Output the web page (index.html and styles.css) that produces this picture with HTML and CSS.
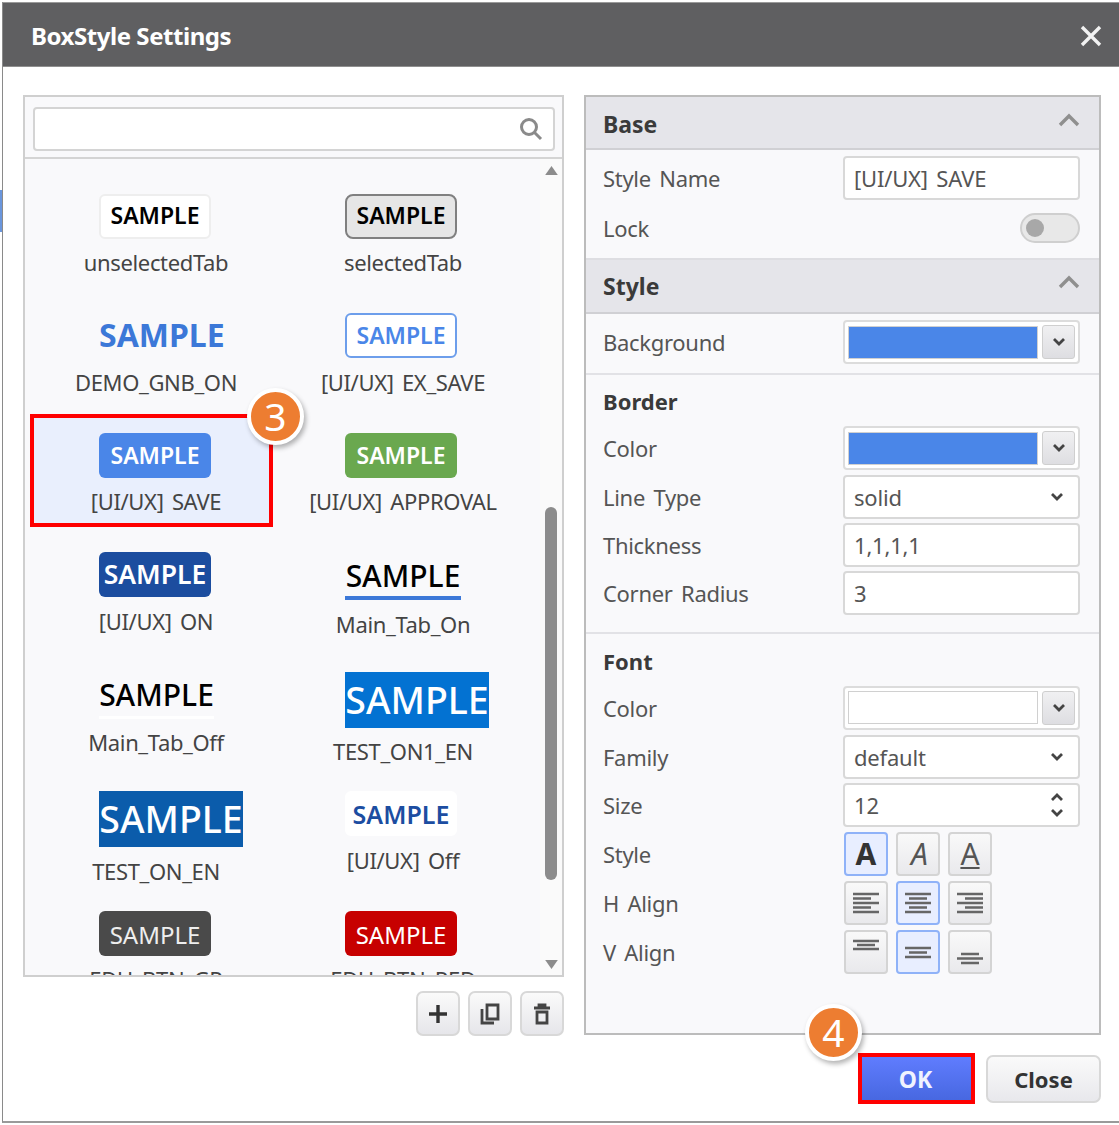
FILE: index.html
```html
<!DOCTYPE html>
<html lang="en">
<head>
<meta charset="utf-8">
<title>BoxStyle Settings</title>
<link rel="stylesheet" href="styles.css">
</head>
<body>
<div class="backdrop-mark"></div>
<div class="dialog">
  <header class="titlebar">
    <h1 class="title">BoxStyle Settings</h1>
    <svg class="close-x" viewBox="0 0 22 22"><path d="M2 2 L20 20 M20 2 L2 20"/></svg>
  </header>
  <div class="content">
    <div class="columns">
      <section class="left">
        <div class="list-panel">
          <div class="search-row">
            <div class="search">
              <svg class="search-icon" viewBox="0 0 24 24"><circle cx="10" cy="10" r="7.5"/><path d="M15.5 15.5 L22 22"/></svg>
            </div>
          </div>
          <div class="scroller">
            <div class="grid">
              <div class="item"><div class="sample s-unselected">SAMPLE</div><div class="name">unselectedTab</div></div>
              <div class="item second"><div class="sample s-selected">SAMPLE</div><div class="name">selectedTab</div></div>
              <div class="item"><div class="sample s-gnb">SAMPLE</div><div class="name">DEMO_GNB_ON</div></div>
              <div class="item second"><div class="sample s-exsave">SAMPLE</div><div class="name">[UI/UX] EX_SAVE</div></div>
              <div class="item is-selected"><div class="sample s-save">SAMPLE</div><div class="name">[UI/UX] SAVE</div></div>
              <div class="item second"><div class="sample s-approval">SAMPLE</div><div class="name">[UI/UX] APPROVAL</div></div>
              <div class="item"><div class="sample s-on">SAMPLE</div><div class="name">[UI/UX] ON</div></div>
              <div class="item second"><div class="sample s-tab-on">SAMPLE</div><div class="name">Main_Tab_On</div></div>
              <div class="item"><div class="sample s-tab-off">SAMPLE</div><div class="name">Main_Tab_Off</div></div>
              <div class="item second"><div class="sample s-test1">SAMPLE</div><div class="name">TEST_ON1_EN</div></div>
              <div class="item"><div class="sample s-test2">SAMPLE</div><div class="name">TEST_ON_EN</div></div>
              <div class="item second"><div class="sample s-off">SAMPLE</div><div class="name">[UI/UX] Off</div></div>
              <div class="item"><div class="sample s-gr">SAMPLE</div><div class="name">EDU_BTN_GR</div></div>
              <div class="item second"><div class="sample s-red">SAMPLE</div><div class="name">EDU_BTN_RED</div></div>
            </div>
            <div class="scrollbar">
              <svg class="arrow" viewBox="0 0 14 10"><path d="M7 0 L14 10 L0 10 Z"/></svg>
              <div class="track"><div class="thumb"></div></div>
              <svg class="arrow" viewBox="0 0 14 10"><path d="M0 0 L14 0 L7 10 Z"/></svg>
            </div>
          </div>
        </div>
        <div class="toolbar">
          <button class="tool"><svg viewBox="0 0 24 24"><path class="ink" d="M12 3 V21 M3 12 H21"/></svg></button>
          <button class="tool"><svg viewBox="0 0 24 24"><path class="ink-thin" d="M9 3 H20 V17 H9 Z M4 7 V21 H16"/></svg></button>
          <button class="tool"><svg viewBox="0 0 24 24"><path class="ink-thin" d="M4 6 H20 M9 6 V3 H15 V6 M7 10 H17 V21 H7 Z"/></svg></button>
        </div>
      </section>

      <section class="props">
        <div class="group-head first"><span>Base</span><svg class="fold" viewBox="0 0 22 14"><path d="M2 12 L11 3 L20 12"/></svg></div>
        <div class="group-body base-body">
          <div class="row"><label>Style Name</label><div class="field">[UI/UX] SAVE</div></div>
          <div class="row lock-row"><label>Lock</label><div class="toggle"><span class="knob"></span></div></div>
        </div>
        <div class="group-head"><span>Style</span><svg class="fold" viewBox="0 0 22 14"><path d="M2 12 L11 3 L20 12"/></svg></div>
        <div class="group-body bg-body">
          <div class="row"><label>Background</label><div class="color-field"><span class="swatch blue"></span><span class="drop"><svg class="chev" viewBox="0 0 14 10"><path d="M2 2 L7 7 L12 2"/></svg></span></div></div>
        </div>
        <div class="group-body border-body">
          <h2 class="sub">Border</h2>
          <div class="row"><label>Color</label><div class="color-field"><span class="swatch blue"></span><span class="drop"><svg class="chev" viewBox="0 0 14 10"><path d="M2 2 L7 7 L12 2"/></svg></span></div></div>
          <div class="row"><label>Line Type</label><div class="field select">solid<svg class="chev" viewBox="0 0 14 10"><path d="M2 2 L7 7 L12 2"/></svg></div></div>
          <div class="row"><label>Thickness</label><div class="field">1,1,1,1</div></div>
          <div class="row"><label>Corner Radius</label><div class="field">3</div></div>
        </div>
        <div class="group-body font-body">
          <h2 class="sub">Font</h2>
          <div class="row"><label>Color</label><div class="color-field"><span class="swatch"></span><span class="drop"><svg class="chev" viewBox="0 0 14 10"><path d="M2 2 L7 7 L12 2"/></svg></span></div></div>
          <div class="row"><label>Family</label><div class="field select">default<svg class="chev" viewBox="0 0 14 10"><path d="M2 2 L7 7 L12 2"/></svg></div></div>
          <div class="row"><label>Size</label><div class="field select">12<span class="spin"><svg class="chev" viewBox="0 0 14 10"><path d="M2 8 L7 3 L12 8"/></svg><svg class="chev" viewBox="0 0 14 10"><path d="M2 2 L7 7 L12 2"/></svg></span></div></div>
          <div class="row"><label>Style</label><div class="btns">
            <button class="opt on a-bold">A</button><button class="opt a-italic">A</button><button class="opt a-under">A</button>
          </div></div>
          <div class="row"><label>H Align</label><div class="btns">
            <button class="opt"><svg viewBox="0 0 28 22"><path d="M1 2 H27 M1 6.500 H19 M1 11 H27 M1 15.500 H19 M1 20 H27"/></svg></button>
            <button class="opt on"><svg viewBox="0 0 28 22"><path d="M1 2 H27 M5 6.500 H23 M1 11 H27 M5 15.500 H23 M1 20 H27"/></svg></button>
            <button class="opt"><svg viewBox="0 0 28 22"><path d="M1 2 H27 M9 6.500 H27 M1 11 H27 M9 15.500 H27 M1 20 H27"/></svg></button>
          </div></div>
          <div class="row"><label>V Align</label><div class="btns">
            <button class="opt"><svg class="valign" viewBox="0 0 28 44"><path d="M1 11 H27 M5 15 H23 M1 19 H27"/></svg></button>
            <button class="opt on"><svg class="valign" viewBox="0 0 28 44"><path d="M1 18 H27 M5 22.500 H23 M1 27 H27"/></svg></button>
            <button class="opt"><svg class="valign" viewBox="0 0 28 44"><path d="M5 24 H23 M1 28.500 H27 M5 33 H23"/></svg></button>
          </div></div>
        </div>
      </section>
    </div>
    <footer class="footer">
      <button class="btn-ok">OK</button>
      <button class="btn-close">Close</button>
    </footer>
  </div>
</div>
<div class="mark-box box-item"></div>
<div class="mark-box box-ok"></div>
<div class="badge badge-3">3</div>
<div class="badge badge-4">4</div>
</body>
</html>
```
FILE: styles.css
```css
* { box-sizing: border-box; }
html, body { margin: 0; padding: 0; }
body {
  width: 1119px;
  height: 1125px;
  overflow: hidden;
  background: #fff;
  padding: 2px 0 0 2px;
  font-family: "Noto Sans", "Noto Sans CJK KR", sans-serif;
  color: #444;
  position: relative;
}
.backdrop-mark {
  position: absolute;
  left: 0;
  top: 190px;
  width: 2px;
  height: 42px;
  background: #6a96dc;
}
.dialog {
  width: 1117px;
  height: 1121px;
  border-left: 1px solid #8a8a8a;
  border-bottom: 2px solid #9a9a9a;
  background: #fff;
  display: flex;
  flex-direction: column;
}
.titlebar {
  height: 65px;
  flex: none;
  background: #5f5f61;
  border-top: 1px solid #9a9a9a;
  border-bottom: 1px solid #8f8f8f;
  display: flex;
  align-items: center;
  justify-content: space-between;
  padding: 2px 17px 0 28px;
}
.title {
  margin: 0;
  font-size: 24px;
  font-weight: 700;
  color: #fff;
  letter-spacing: -.45px;
  line-height: 30px;
}
.close-x { width: 22px; height: 22px; fill: none; stroke: #f2f2f2; stroke-width: 3.400; }
.content { flex: 1; padding: 28px 18px 0 20px; display: flex; flex-direction: column; }
.columns { display: flex; gap: 20px; align-items: flex-start; }
.left { width: 541px; flex: none; }
.list-panel {
  height: 882px;
  border: 2px solid #cfcfcf;
  background: #f9f9fb;
  display: flex;
  flex-direction: column;
}
.search-row {
  height: 62px;
  flex: none;
  padding: 10px 7px 0 8px;
  border-bottom: 2px solid #d4d4d4;
}
.search {
  height: 44px;
  background: #fff;
  border: 2px solid #d4d4d4;
  border-radius: 4px;
  display: flex;
  align-items: center;
  justify-content: flex-end;
  padding-right: 10px;
}
.search-icon { width: 24px; height: 24px; fill: none; stroke: #8a8a8a; stroke-width: 3; }
.scroller { flex: 1; min-height: 0; display: flex; overflow: hidden; }
.grid {
  flex: 1;
  padding: 18.500px 0 0 8px;
  display: grid;
  grid-template-columns: 238px 238px;
  column-gap: 9px;
  grid-auto-rows: 119.500px;
}
.item { height: 108px; padding: 16px 0 0 66px; position: relative; }
.item.second { padding-left: 65px; }
.item.is-selected { background: #e9effd; }
.name {
  position: relative;
  width: 300px;
  margin-left: -93px;
  margin-top: 8.500px;
  text-align: center;
  font-size: 22px;
  line-height: 30px;
  color: #444;
  word-spacing: 3px;
  letter-spacing: -.35px;
  white-space: nowrap;
}
.second .name { margin-left: -92px; }
.sample {
  width: 112px;
  height: 45px;
  border-radius: 6px;
  display: flex;
  align-items: center;
  justify-content: center;
  font-size: 23px;
  font-weight: 600;
  line-height: 1;
  padding-bottom: 1px;
  white-space: nowrap;
  overflow: visible;
}
.s-unselected { background: #fff; border: 2px solid #eee; color: #000; }
.s-selected { background: #e6e6e6; border: 2px solid #808080; color: #000; border-radius: 8px; }
.s-gnb { width: 126px; color: #3c78d8; font-size: 32px; font-weight: 700; justify-content: flex-start; }
.s-exsave { background: #fff; border: 2px solid #6d9eeb; color: #4a86e8; padding-bottom: 0; }
.s-save { background: #4a86e8; color: #fff; padding-bottom: 0; }
.s-approval { background: #6aa84f; color: #fff; padding-bottom: 0; }
.s-on { background: #1c4d9f; color: #fff; font-size: 26.500px; padding-bottom: 0; }
.s-tab-on { width: 116px; height: 39px; margin-top: 9px; border-radius: 0; border-bottom: 4px solid #3c78d8; color: #000; font-size: 30px; font-weight: 500; padding-bottom: 5px; }
.s-tab-off { width: 115px; height: 39px; margin-top: 8px; margin-bottom: 5px; border-radius: 0; border-bottom: 3px solid #fff; color: #000; font-size: 30px; font-weight: 500; padding-bottom: 5px; }
.s-test1 { width: 144px; height: 56px; border-radius: 0; background: #0372d2; color: #fff; font-size: 37.500px; font-weight: 500; padding-bottom: 0; }
.s-test2 { width: 144px; height: 56px; border-radius: 0; background: #0b5cab; color: #fff; font-size: 37.500px; font-weight: 500; padding-bottom: 0; }
.s-off { background: #fff; color: #1c4da1; font-size: 25px; padding-bottom: 0; padding-top: 2px; }
.s-gr { background: #4a4a4a; color: #eee; font-weight: 400; font-size: 24px; padding-bottom: 0; padding-top: 3px; }
.s-red { background: #c70000; color: #fff; font-weight: 400; font-size: 24px; padding-bottom: 0; padding-top: 3px; }

.scrollbar {
  width: 22px;
  flex: none;
  background: #fafafa;
  display: flex;
  flex-direction: column;
  align-items: center;
  padding: 7px 0 6px;
}
.arrow { width: 13px; height: 9px; fill: #8c8c8c; flex: none; }
.track { flex: 1; width: 12px; padding-top: 332px; }
.thumb { width: 12px; height: 373px; background: #8c8c8c; border-radius: 6px; }

.toolbar { display: flex; justify-content: flex-end; gap: 8px; margin-top: 14px; }
.tool {
  width: 44px;
  height: 45px;
  padding: 0;
  border: 2px solid #d8d8d8;
  border-radius: 7px;
  background: linear-gradient(#fafafa, #e6e6ea);
  display: flex;
  align-items: center;
  justify-content: center;
}
.tool svg { width: 24px; height: 24px; fill: none; }
.ink { stroke: #333; stroke-width: 3.400; }
.ink-thin { stroke: #444; stroke-width: 2.800; }

.props {
  width: 517px;
  flex: none;
  height: 940px;
  border: 2px solid #bcbcbc;
  background: #f9f9fb;
}
.group-head {
  height: 54px;
  background: #e5e5ea;
  border-bottom: 2px solid #d0d0d4;
  display: flex;
  align-items: center;
  justify-content: space-between;
  padding: 0 19px 0 17px;
  font-size: 23px;
  font-weight: 700;
  color: #3a3a3a;
}
.group-head.first { height: 53px; padding-top: 2px; }
.fold { width: 22px; height: 14px; fill: none; stroke: #8f8f8f; stroke-width: 3.400; margin-bottom: 8px; }
.group-body { padding: 0 19px 0 17px; display: flex; flex-direction: column; gap: 4.800px; }
.base-body { height: 110px; padding-top: 6px; border-bottom: 2px solid #dedee2; }
.bg-body { height: 61px; padding-top: 6px; border-bottom: 2px solid #e2e2e6; }
.border-body { height: 259px; gap: 4.300px; border-bottom: 2px solid #e2e2e6; }
.sub {
  margin: 0;
  height: 47px;
  padding-top: 11px;
  font-size: 22px;
  font-weight: 700;
  line-height: 30px;
  color: #3a3a3a;
}
.font-body .sub { height: 47px; padding-top: 12px; }
.row { height: 44px; display: flex; align-items: center; justify-content: space-between; flex: none; }
.row label { font-size: 22px; color: #555; word-spacing: 3px; letter-spacing: -.3px; }
.lock-row { height: 30px; margin-top: 8px; }
.field {
  width: 237px;
  height: 44px;
  background: #fff;
  border: 2px solid #d8d8d8;
  border-radius: 4px;
  padding: 0 9px;
  display: flex;
  align-items: center;
  justify-content: space-between;
  font-size: 22px;
  color: #555;
  word-spacing: 3px;
  letter-spacing: -.2px;
}
.chev { width: 14px; height: 10px; fill: none; stroke: #444; stroke-width: 2.800; flex: none; }
.select { padding-right: 14px; }
.spin { display: flex; flex-direction: column; gap: 6px; }
.toggle {
  width: 60px;
  height: 30px;
  border-radius: 15px;
  background: #e8e8e8;
  border: 2px solid #cfcfcf;
  display: flex;
  align-items: center;
  padding-left: 4px;
}
.knob { width: 18px; height: 18px; border-radius: 50%; background: #a8a8a8; }
.color-field {
  width: 237px;
  height: 44px;
  background: #fff;
  border: 2px solid #dcdcdc;
  border-radius: 4px;
  padding: 3px;
  display: flex;
  align-items: center;
  justify-content: space-between;
}
.swatch { width: 190px; height: 33px; background: #fff; border: 1px solid #d0d0d0; }
.swatch.blue { background: #4a86e8; }
.drop {
  width: 33px;
  height: 34px;
  background: linear-gradient(#f0f0f2, #dedee2);
  border: 1px solid #cfcfcf;
  border-radius: 3px;
  display: flex;
  align-items: center;
  justify-content: center;
}
.btns { width: 236px; display: flex; gap: 8px; }
.opt {
  width: 44px;
  height: 44px;
  padding: 0;
  border: 2px solid #d4d4d4;
  border-radius: 4px;
  background: linear-gradient(#f9f9f9, #e9e9ec);
  display: flex;
  align-items: center;
  justify-content: center;
  font-family: "Noto Sans", sans-serif;
  font-size: 30px;
  line-height: 1;
  color: #555;
}
.opt.on { background: #e8eeff; border-color: #8fb2f8; }
.opt svg { width: 28px; height: 22px; fill: none; stroke: #666; stroke-width: 2.600; }
.opt svg.valign { height: 44px; align-self: flex-start; margin-top: -2px; }
.a-bold { font-weight: 700; color: #333; }
.a-italic { font-style: italic; padding-left: 3px; }
.a-under { text-decoration: underline; text-underline-offset: 2px; text-decoration-thickness: 2px; }

.footer {
  display: flex;
  justify-content: flex-end;
  gap: 13px;
  margin-top: 19px;
}
.btn-ok, .btn-close {
  padding: 0;
  font-family: "Noto Sans", sans-serif;
  font-weight: 700;
}
.btn-ok {
  width: 113px;
  margin-top: 1px;
  margin-right: 1px;
  height: 45px;
  font-size: 23px;
  border: 0;
  color: #f0f3ff;
  background: linear-gradient(#607dff, #4767e0);
}
.btn-close {
  width: 115px;
  height: 48px;
  font-size: 22px;
  color: #333;
  border: 2px solid #d8d8d8;
  border-radius: 7px;
  background: linear-gradient(#fafafa, #e8e8ec);
}

.mark-box { position: absolute; border: 4px solid #ff0000; }
.box-item { left: 30px; top: 414px; width: 243px; height: 113px; }
.box-ok { left: 858px; top: 1053px; width: 117px; height: 51px; }
.badge {
  position: absolute;
  width: 57px;
  height: 57px;
  border-radius: 50%;
  background: #ed7d31;
  border: 4px solid #fff;
  box-shadow: 2px 3px 5px rgba(0,0,0,.3);
  color: #fff;
  font-family: "Noto Sans", sans-serif;
  font-size: 39px;
  line-height: 47px;
  text-align: center;
}
.badge-3 { left: 247px; top: 388px; }
.badge-4 { left: 805px; top: 1004px; }
```
